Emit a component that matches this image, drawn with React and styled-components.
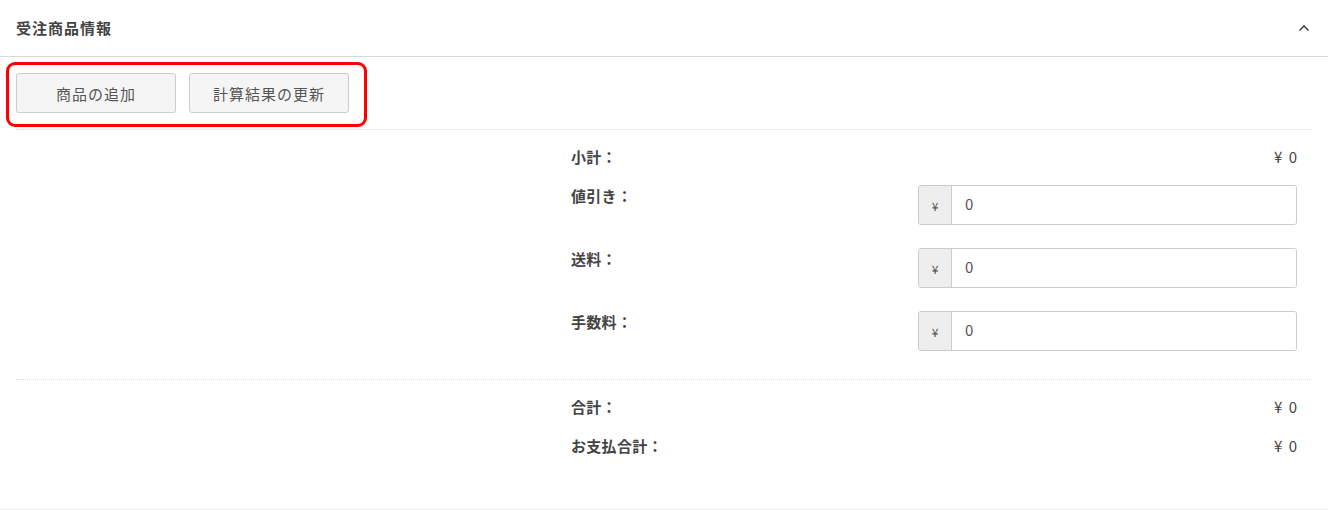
import React from 'react';
import styled, { createGlobalStyle } from 'styled-components';

const GlobalStyle = createGlobalStyle`
  html, body {
    margin: 0;
    padding: 0;
    background: #fff;
  }
  body {
    font-family: "Noto Sans CJK JP", "Noto Sans", sans-serif;
    font-size: 14px;
    color: #333;
  }
`;

const Card = styled.section`
  width: 1328px;
  height: 510px;
  box-sizing: border-box;
  border-bottom: 1px solid #f0f0f0;
  background: #fff;
`;

const Header = styled.div`
  height: 56px;
  display: flex;
  align-items: center;
  justify-content: space-between;
  padding: 0 18px 0 16px;
  border-bottom: 1px solid #d9d9d9;
`;

const Title = styled.h2`
  margin: 0;
  font-size: 15px;
  letter-spacing: 1px;
  font-weight: 700;
  color: #444;
  line-height: 20px;
`;

const Toolbar = styled.div`
  position: relative;
  display: flex;
  gap: 13px;
  padding: 16px;
`;

const Highlight = styled.div`
  position: absolute;
  left: 6px;
  top: 5px;
  width: 361px;
  height: 65px;
  box-sizing: border-box;
  border: 3px solid #f00;
  border-radius: 9px;
  pointer-events: none;
`;

const Button = styled.button`
  width: 160px;
  height: 40px;
  box-sizing: border-box;
  background: #f5f5f5;
  border: 1px solid #ccc;
  border-radius: 3px;
  font-family: inherit;
  font-size: 15px;
  letter-spacing: 1px;
  color: #555;
  padding: 0;
`;

const Divider = styled.hr`
  margin: 0 16px;
  border: 0;
  border-top: 1px dotted #dcdcdc;
  height: 0;
`;

const Summary = styled.div`
  display: flex;
  flex-direction: column;
  padding: ${p => p.$pad};
  margin-left: 571px;
  margin-right: 31px;
`;

const Row = styled.div`
  display: grid;
  grid-template-columns: 1fr 379px;
  align-items: start;
  margin-bottom: ${p => p.$gap || 0}px;
`;

const Label = styled.div`
  font-weight: 700;
  font-size: 15px;
  letter-spacing: 0.3px;
  color: #444;
  line-height: 20px;
  padding-top: ${p => p.$offset || 0}px;
`;

const Value = styled.div`
  text-align: right;
  color: #444;
  font-size: 15px;
  line-height: 20px;
  word-spacing: 3px;
`;

const InputGroup = styled.div`
  display: flex;
  height: 40px;
  box-sizing: border-box;
  border: 1px solid #ccc;
  border-radius: 3px;
  overflow: hidden;
`;

const Addon = styled.span`
  width: 32px;
  display: flex;
  align-items: center;
  justify-content: center;
  background: #eee;
  border-right: 1px solid #ccc;
  font-size: 12px;
  color: #555;
`;

const Field = styled.input`
  flex: 1;
  border: 0;
  outline: none;
  padding: 0 13px 3px;
  font-family: inherit;
  font-size: 15px;
  color: #555;
  background: #fff;
`;

function Chevron() {
  return (
    <svg width="12" height="8" viewBox="0 0 12 8">
      <polyline points="1.5,6.5 6,2 10.5,6.5" fill="none" stroke="#333" strokeWidth="1.4" />
    </svg>
  );
}

function MoneyInput() {
  return (
    <InputGroup>
      <Addon>¥</Addon>
      <Field defaultValue="0" />
    </InputGroup>
  );
}

export default function App() {
  return (
    <>
      <GlobalStyle />
      <Card>
        <Header>
          <Title>受注商品情報</Title>
          <Chevron />
        </Header>
        <Toolbar>
          <Highlight />
          <Button>商品の追加</Button>
          <Button>計算結果の更新</Button>
        </Toolbar>
        <Divider />
        <Summary $pad="17px 0 28px">
          <Row $gap={18}>
            <Label>小計：</Label>
            <Value>¥ 0</Value>
          </Row>
          <Row $gap={23}>
            <Label $offset={1}>値引き：</Label>
            <MoneyInput />
          </Row>
          <Row $gap={23}>
            <Label $offset={1}>送料：</Label>
            <MoneyInput />
          </Row>
          <Row>
            <Label $offset={1}>手数料：</Label>
            <MoneyInput />
          </Row>
        </Summary>
        <Divider />
        <Summary $pad="17px 0 0">
          <Row $gap={19}>
            <Label>合計：</Label>
            <Value>¥ 0</Value>
          </Row>
          <Row>
            <Label>お支払合計：</Label>
            <Value>¥ 0</Value>
          </Row>
        </Summary>
      </Card>
    </>
  );
}
